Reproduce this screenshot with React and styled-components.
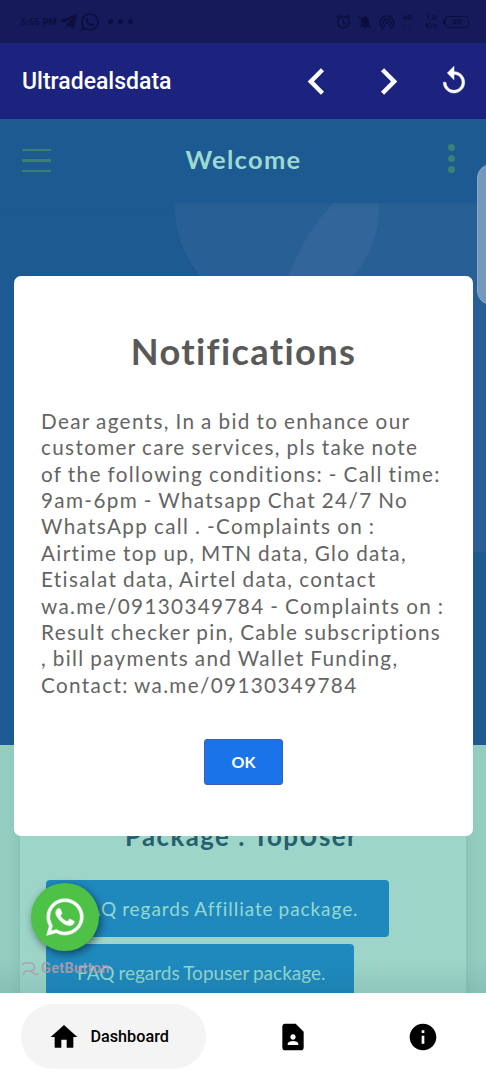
import React, { useState } from 'react';
import styled, { createGlobalStyle } from 'styled-components';
import {
  MdAlarm,
  MdChevronLeft,
  MdChevronRight,
  MdContactPage,
  MdHome,
  MdInfo,
  MdNotifications,
  MdReplay,
  MdWifiTethering,
} from 'react-icons/md';
import { FaTelegramPlane, FaWhatsapp } from 'react-icons/fa';

const GlobalStyle = createGlobalStyle`
  * {
    box-sizing: border-box;
  }
  body {
    margin: 0;
    overflow: hidden;
    font-family: Lato, sans-serif;
  }
  button {
    font: inherit;
    border: none;
    cursor: pointer;
  }
  svg {
    display: block;
    flex-shrink: 0;
  }
`;

const Screen = styled.div`
  position: relative;
  display: flex;
  flex-direction: column;
  width: 486px;
  height: 1080px;
  overflow: hidden;
`;

const StatusBar = styled.div`
  display: flex;
  justify-content: space-between;
  height: 43px;
  padding: 0 17px 0 21px;
  background: #151a5b;
  color: #0c0f3c;
  font-family: Roboto, sans-serif;
`;

const StatusGroup = styled.div`
  display: flex;
  align-items: center;
  gap: ${(props) => props.$gap || 0}px;
`;

const Clock = styled.span`
  width: 38px;
  font-size: 9.5px;
  font-weight: 700;
  white-space: nowrap;
`;

const ChatNotice = styled(FaWhatsapp)`
  margin-left: 2px;
`;

const Dots = styled.span`
  display: flex;
  gap: 5px;
  margin-left: 8px;

  i {
    width: 5px;
    height: 5px;
    border-radius: 50%;
    background: currentColor;
  }
`;

// bell with a slash across it
const MutedBell = styled.span`
  position: relative;

  &::after {
    content: '';
    position: absolute;
    left: 7px;
    top: -1px;
    width: 1px;
    height: 18px;
    background: currentColor;
    transform: rotate(-45deg);
  }
`;

const TinyText = styled.span`
  width: 13px;
  margin-right: ${(props) => props.$after || 0}px;
  font-size: 7.5px;
  font-weight: 700;
  line-height: 8px;
  text-align: center;
  white-space: pre;
`;

const Battery = styled.span`
  display: flex;
  align-items: center;

  &::before {
    content: '';
    width: 2px;
    height: 5px;
    background: currentColor;
  }
`;

const BatteryBody = styled.span`
  width: 24px;
  height: 12px;
  border: 1px solid currentColor;
  border-radius: 3px;
  font-size: 8px;
  font-weight: 700;
  line-height: 10px;
  text-align: center;
`;

const AppBar = styled.header`
  display: flex;
  align-items: center;
  height: 76px;
  padding-left: 22px;
  background: #1b237e;
  color: #fff;
`;

const AppName = styled.h1`
  flex: 1;
  margin: 0;
  font: 500 23px Roboto, sans-serif;
`;

const NavButton = styled.button`
  display: flex;
  align-items: center;
  justify-content: center;
  width: ${(props) => props.$width}px;
  height: 76px;
  padding: 0;
  background: none;
  color: #fff;
`;

const ReloadIcon = styled(MdReplay)`
  margin-right: 2px;

  path:last-child {
    stroke: currentColor;
    stroke-width: 0.4px;
  }
`;

const WebView = styled.main`
  position: relative;
  isolation: isolate;
  height: 874px;
  overflow: hidden;
  background: #93cdc0;
`;

const PageHeader = styled.div`
  position: relative;
  z-index: 1;
  display: grid;
  grid-template-columns: 1fr auto 1fr;
  align-items: center;
  height: 84px;
  padding: 0 31px 4px 22px;
  background: #1e5a92;
  box-shadow: 0 1px 4px rgba(31, 96, 130, 0.6);
`;

const Hamburger = styled.div`
  display: flex;
  flex-direction: column;
  gap: 8px;
  width: 29px;
  margin-top: 3px;

  i {
    height: 2.6px;
    background: #3c7d74;
  }
`;

const PageTitle = styled.h2`
  margin: 0 0 0 10px;
  color: #9dd9d0;
  font-size: 25.5px;
  font-weight: 700;
  letter-spacing: 1.3px;
`;

const Kebab = styled.div`
  display: flex;
  flex-direction: column;
  justify-self: end;
  gap: 4px;
  margin-top: -1px;

  i {
    width: 7px;
    height: 7px;
    border-radius: 50%;
    background: #3c8072;
  }
`;

const Hero = styled.div`
  position: relative;
  height: 542px;
  overflow: hidden;
  background: #1e5a92;
`;

const Bubble = styled.span`
  position: absolute;
  left: ${(props) => props.$x - props.$r}px;
  top: ${(props) => props.$y - props.$r}px;
  width: ${(props) => props.$r * 2}px;
  height: ${(props) => props.$r * 2}px;
  border-radius: 50%;
  background: rgba(180, 190, 210, 0.07);
`;

const PackageCard = styled.section`
  width: 446px;
  height: 300px;
  margin: 0 0 0 20px;
  padding: 76px 26px 0;
  background: #9dd5c8;
  box-shadow: 0 0 10px rgba(60, 120, 110, 0.18);
`;

const PackageTitle = styled.h3`
  height: 59px;
  margin: 0 3px 0 0;
  color: #265f6e;
  font-size: 25.8px;
  font-weight: 700;
  line-height: 30px;
  letter-spacing: 1.45px;
  text-align: center;
`;

const FaqButton = styled.button`
  display: block;
  width: ${(props) => props.$width}px;
  height: 57px;
  margin-bottom: 7px;
  padding: 0 0 1px 31px;
  border-radius: 4px;
  background: #1f89be;
  color: #96d7cf;
  font-size: 19px;
  letter-spacing: ${(props) => props.$spacing}px;
  word-spacing: -0.8px;
  text-align: left;
  white-space: nowrap;
`;

const BottomShade = styled.div`
  position: absolute;
  left: 0;
  right: 0;
  bottom: 0;
  height: 34px;
  background: linear-gradient(transparent, rgba(20, 70, 80, 0.1));
`;

const ChatButton = styled.button`
  position: absolute;
  left: 31px;
  top: 764px;
  display: flex;
  align-items: center;
  justify-content: center;
  width: 68px;
  height: 68px;
  padding: 0;
  border-radius: 50%;
  background: #4dc247;
  color: #fff;
  box-shadow: 2px 3px 8px rgba(0, 0, 0, 0.5);
`;

const ChatIcon = styled(FaWhatsapp)`
  stroke: currentColor;
  stroke-width: 6px;
`;

const GetButton = styled.div`
  position: absolute;
  left: 22px;
  top: 841px;
  display: flex;
  align-items: center;
  gap: 2px;
  color: rgba(177, 155, 170, 0.9);
  font: 700 14.5px/18px Roboto, sans-serif;
  letter-spacing: 0.3px;
`;

const EdgeHandle = styled.div`
  position: absolute;
  left: 477px;
  top: 164px;
  width: 30px;
  height: 141px;
  border: 1px solid #8aa8c8;
  border-radius: 14px;
  background: #7598bc;
`;

const Modal = styled.div`
  position: absolute;
  left: 14px;
  top: 276px;
  display: flex;
  flex-direction: column;
  align-items: center;
  width: 459px;
  height: 560px;
  padding-top: 52px;
  border-radius: 7px;
  background: #fff;
`;

const ModalTitle = styled.h2`
  margin: 0;
  color: #595959;
  font-size: 36.2px;
  font-weight: 700;
  line-height: 46px;
  letter-spacing: 1.35px;
`;

const ModalText = styled.p`
  width: 405px;
  margin: 34px 0 41px;
  color: #646464;
  font-size: 20.7px;
  line-height: 26.36px;
  letter-spacing: 1.35px;
  word-spacing: -0.9px;
  white-space: pre;
`;

const OkButton = styled.button`
  width: 79px;
  height: 46px;
  padding: 0;
  border: 1px solid #3a5fb4;
  border-radius: 3px;
  background: #1a73e8;
  color: #fff;
  font-size: 16px;
  font-weight: 700;
`;

const TabBar = styled.nav`
  display: flex;
  align-items: center;
  height: 87px;
  padding-left: 21px;
  background: #fff;
`;

const Tab = styled.button`
  display: flex;
  flex-shrink: 0;
  align-items: center;
  justify-content: ${(props) => (props.$active ? 'flex-start' : 'center')};
  gap: 11px;
  width: ${(props) => (props.$active ? 185 : 130)}px;
  height: 65px;
  margin-right: ${(props) => (props.$active ? 22 : 0)}px;
  padding: ${(props) => (props.$active ? '0 0 0 26.500px' : '0')};
  border-radius: 33px;
  background: ${(props) => (props.$active ? '#f4f4f4' : 'none')};
  color: #000;
  font: 500 16.2px Roboto, sans-serif;
`;

const notice = `Dear agents, In a bid to enhance our
customer care services, pls take note
of the following conditions: - Call time:
9am-6pm - Whatsapp Chat 24/7 No
WhatsApp call . -Complaints on :
Airtime top up, MTN data, Glo data,
Etisalat data, Airtel data, contact
wa.me/09130349784 - Complaints on :
Result checker pin, Cable subscriptions
, bill payments and Wallet Funding,
Contact: wa.me/09130349784`;

const tabs = [
  { id: 'dashboard', label: 'Dashboard', Icon: MdHome },
  { id: 'contact', label: 'Contact', Icon: MdContactPage },
  { id: 'info', label: 'Info', Icon: MdInfo },
];

export default function App() {
  const [isModalOpen, setIsModalOpen] = useState(true);
  const [activeTab, setActiveTab] = useState('dashboard');

  return (
    <Screen>
      <GlobalStyle />
      <StatusBar>
        <StatusGroup>
          <Clock>5:55 PM</Clock>
          <FaTelegramPlane size={19} />
          <ChatNotice size={20} />
          <Dots><i /><i /><i /></Dots>
        </StatusGroup>
        <StatusGroup $gap={5}>
          <MdAlarm size={17} />
          <MutedBell><MdNotifications size={16} /></MutedBell>
          <MdWifiTethering size={18} />
          <TinyText $after={6}>{'4G\n↑↓.'}</TinyText>
          <TinyText>{'1.0\nK/s'}</TinyText>
          <Battery><BatteryBody>38</BatteryBody></Battery>
        </StatusGroup>
      </StatusBar>

      <AppBar>
        <AppName>Ultradealsdata</AppName>
        <NavButton $width={72}><MdChevronLeft size={53} /></NavButton>
        <NavButton $width={72}><MdChevronRight size={53} /></NavButton>
        <NavButton $width={62}><ReloadIcon size={32} /></NavButton>
      </AppBar>

      <WebView>
        <PageHeader>
          <Hamburger><i /><i /><i /></Hamburger>
          <PageTitle>Welcome</PageTitle>
          <Kebab><i /><i /><i /></Kebab>
        </PageHeader>
        <Hero>
          <Bubble $x={277} $y={5} $r={102} />
          <Bubble $x={484} $y={142} $r={207} />
        </Hero>
        <PackageCard>
          <PackageTitle>Package : TopUser</PackageTitle>
          <FaqButton $width={343} $spacing={0.93}>FAQ regards Affilliate package.</FaqButton>
          <FaqButton $width={308} $spacing={0}>FAQ regards Topuser package.</FaqButton>
        </PackageCard>
        <BottomShade />
        <ChatButton><ChatIcon size={42} /></ChatButton>
        <GetButton>
          <svg width="17" height="14" viewBox="0 0 17 14" fill="none" stroke="currentColor" strokeWidth="1.5" strokeLinecap="round">
            <path d="M1 3C1 1.500 2 1 3.500 1H8c6 0 6 8 .5 8H5.500C3.500 9 2 10.500 1.500 12.500M9 9.500l3.500 2.500c1.500 1 2.500 .5 3.500 0" />
          </svg>
          GetButton
        </GetButton>
      </WebView>

      <TabBar>
        {tabs.map(({ id, label, Icon }) => (
          <Tab key={id} $active={activeTab === id} onClick={() => setActiveTab(id)}>
            <Icon size={32} />
            {activeTab === id && label}
          </Tab>
        ))}
      </TabBar>

      <EdgeHandle />
      {isModalOpen && (
        <Modal>
          <ModalTitle>Notifications</ModalTitle>
          <ModalText>{notice}</ModalText>
          <OkButton onClick={() => setIsModalOpen(false)}>OK</OkButton>
        </Modal>
      )}
    </Screen>
  );
}
